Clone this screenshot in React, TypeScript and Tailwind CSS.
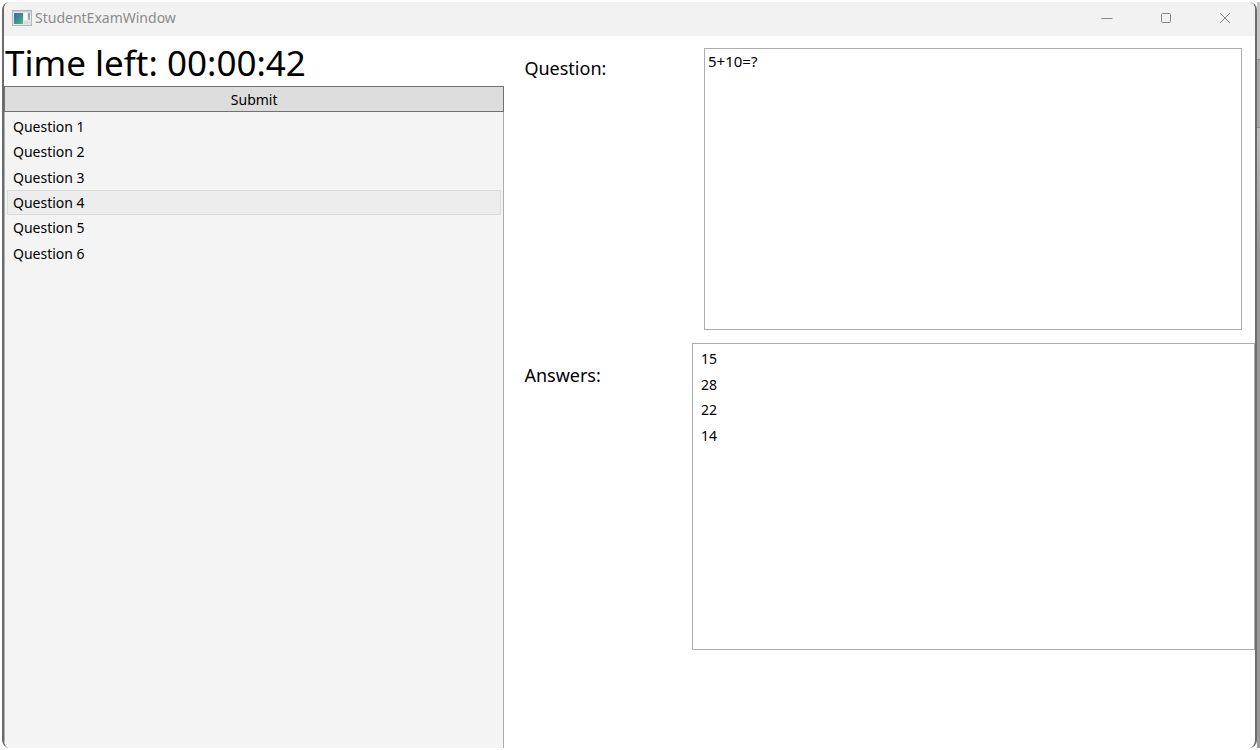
import { useState } from "react";

const questions = ["Question 1", "Question 2", "Question 3", "Question 4", "Question 5", "Question 6"];
const answers = ["15", "28", "22", "14"];

function AppIcon() {
  return (
    <svg width="20" height="16" viewBox="0 0 20 16" aria-hidden="true">
      <defs>
        <linearGradient id="screen" x1="0" y1="0" x2="1" y2="1">
          <stop offset="0" stopColor="#2f6fa6" />
          <stop offset="0.5" stopColor="#3d8f8c" />
          <stop offset="1" stopColor="#5bb57c" />
        </linearGradient>
        <linearGradient id="gauge" x1="0" y1="0" x2="0" y2="1">
          <stop offset="0" stopColor="#7f9fc0" />
          <stop offset="1" stopColor="#8fc4a4" />
        </linearGradient>
      </defs>
      <rect x="0.5" y="0.5" width="19" height="15" fill="#e6e8e9" stroke="#b3b7ba" />
      <rect x="1" y="1" width="18" height="1" fill="#c9cdd0" />
      <rect x="2" y="3" width="9" height="11" fill="url(#screen)" />
      <rect x="12" y="3" width="3" height="7" fill="#f7f8f8" />
      <rect x="16" y="3" width="2" height="7" fill="url(#gauge)" />
      <rect x="12" y="11" width="6" height="3" fill="#dadddf" />
    </svg>
  );
}

function TitleBar() {
  const button = "flex w-[59px] items-center justify-center text-[#858585]";
  return (
    <header className="flex h-[34px] shrink-0 bg-[#f2f2f2] pl-2">
      <div className="flex flex-1 items-center gap-[3px] pb-[2px]">
        <AppIcon />
        <h1 className="text-[14px] leading-5 text-[#8c8c8c]">StudentExamWindow</h1>
      </div>
      <div className="flex pr-px pb-[3px]">
        <button type="button" aria-label="Minimize" className={button}>
          <svg width="12" height="12" fill="none" stroke="currentColor"><path d="M0.5 6.5h11" /></svg>
        </button>
        <button type="button" aria-label="Maximize" className={button}>
          <svg width="12" height="12" fill="none" stroke="currentColor"><rect x="1.5" y="1.5" width="9" height="9" rx="1" /></svg>
        </button>
        <button type="button" aria-label="Close" className={button}>
          <svg width="12" height="12" fill="none" stroke="currentColor"><path d="M1 1l10 10M11 1L1 11" /></svg>
        </button>
      </div>
    </header>
  );
}

type OptionListProps = {
  items: string[];
  selected: number;
  onSelect: (index: number) => void;
  label: string;
  className: string;
};

function OptionList({ items, selected, onSelect, label, className }: OptionListProps) {
  return (
    <ul aria-label={label} className={className}>
      {items.map((item, i) => (
        <li key={item} className="flex">
          <button
            type="button"
            aria-pressed={selected === i}
            onClick={() => onSelect(i)}
            className={`flex flex-1 items-center border px-[5px] pt-px text-left text-[14px] leading-5 ${
              selected === i ? "border-[#dadada] bg-[#ededed]" : "border-transparent"
            }`}
          >
            {item}
          </button>
        </li>
      ))}
    </ul>
  );
}

export default function App() {
  const [selected, setSelected] = useState(3);
  const [answer, setAnswer] = useState(-1);
  return (
    <div className="flex min-h-screen bg-white py-[2px] pl-[2px] font-['Noto_Sans','Open_Sans',sans-serif] text-black">
      <div className="flex flex-1 flex-col overflow-hidden rounded-[8px] border-x-2 border-[#6b6b6b] bg-white">
        <TitleBar />
        <main className="grid flex-1 grid-cols-[2fr_3fr]">
          <section className="flex flex-col">
            <p className="h-[50px] pl-px text-[35px] leading-[54px]">Time left: 00:00:42</p>
            <button type="button" className="h-[26px] border border-[#707070] bg-[#dddddd] pt-px text-[14px] leading-6">
              Submit
            </button>
            <div className="flex-1 border-x border-[#abadb3] bg-[#f4f4f4] p-[2px]">
              <OptionList
                items={questions}
                selected={selected}
                onSelect={setSelected}
                label="Questions"
                className="grid h-[152px] grid-rows-6"
              />
            </div>
          </section>
          <section className="grid grid-cols-[1fr_3fr] grid-rows-[307fr_307fr_98fr]">
            <label htmlFor="question" className="px-5 pt-5 text-[18px] leading-6">Question:</label>
            <div className="flex p-[13px] pl-3 pt-3">
              <textarea
                id="question"
                readOnly
                defaultValue="5+10=?"
                className="flex-1 resize-none border border-[#abadb3] bg-white px-[3px] py-[2px] text-[15px] leading-5 outline-none"
              />
            </div>
            <h2 className="px-5 pt-5 text-[18px] leading-6">Answers:</h2>
            <div className="border border-[#abadb3] p-[2px]">
              <OptionList
                items={answers}
                selected={answer}
                onSelect={setAnswer}
                label="Answers"
                className="grid h-[102px] grid-rows-4"
              />
            </div>
          </section>
        </main>
      </div>
      <div className="flex w-[3px] flex-col bg-[#9a9a9a]">
        <div className="h-[57px] bg-[#c4c4c4]" />
        <div className="h-[69px] border-y border-[#8c8c8c] bg-[#a6a6a6]" />
        <div className="h-[120px] bg-gradient-to-b from-[#bcbcbc] to-[#9a9a9a]" />
      </div>
    </div>
  );
}
